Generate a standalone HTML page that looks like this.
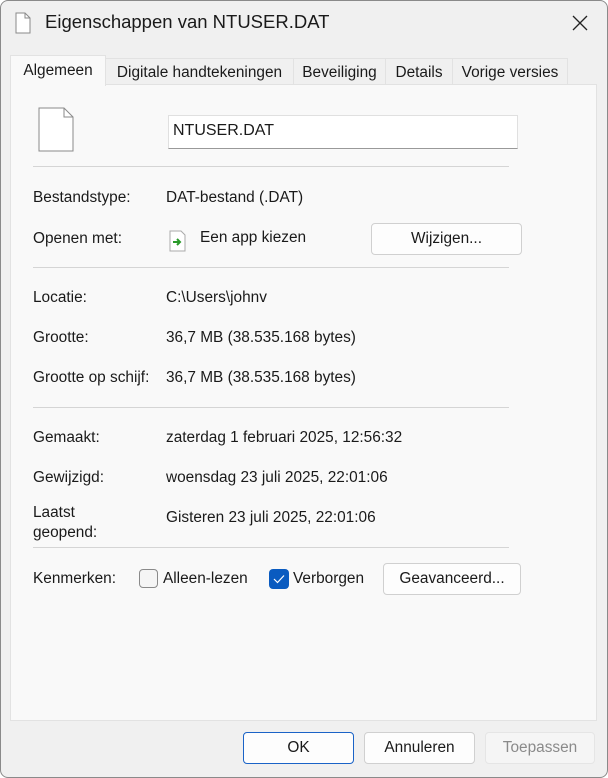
<!DOCTYPE html>
<html><head><style>
body{margin:0;width:608px;height:778px;background:#fff;font-family:"Liberation Sans",sans-serif;font-size:15.4px;color:#1a1a1a;overflow:hidden}
.win{position:absolute;left:0;top:0;width:606px;height:776px;border:1px solid #8a8a8a;border-radius:8px;background:#f0f0f0;overflow:hidden}
.in{position:absolute;left:-1px;top:-1px;width:608px;height:778px}
.abs{position:absolute;white-space:nowrap}
.panel{position:absolute;left:10px;top:84px;width:585px;height:635px;background:#f9f9f9;border:1px solid #e2e2e2}
.tab{position:absolute;top:58px;height:26px;border:1px solid #e2e2e2;border-bottom:none;background:#f0f0f0;box-sizing:border-box;text-align:center;line-height:28px}
.sep{position:absolute;left:33px;width:476px;height:1px;background:#d5d5d5}
.btn{position:absolute;height:32px;box-sizing:border-box;border:1px solid #d0d0d0;border-radius:4px;background:#fdfdfd;text-align:center;line-height:30px}
</style></head><body><div class="win"><div class="in">
<svg class="abs" style="left:15px;top:12px" width="16" height="22"><path d="M1 1H10L15 6V21H1Z" fill="#fff" stroke="#8a8a8a"/><path d="M10 1V6H15" fill="none" stroke="#8a8a8a"/></svg>
<div class="abs" style="left:45px;top:11px;font-size:18.5px">Eigenschappen van NTUSER.DAT</div>
<svg class="abs" style="left:572px;top:15px" width="16" height="16"><path d="M1 1L15 15M15 1L1 15" stroke="#222" stroke-width="1.3"/></svg>
<div class="panel"></div>
<div class="tab" style="left:105px;width:189px">Digitale handtekeningen</div>
<div class="tab" style="left:293px;width:93px">Beveiliging</div>
<div class="tab" style="left:385px;width:68px">Details</div>
<div class="tab" style="left:452px;width:116px">Vorige versies</div>
<div class="tab" style="left:10px;top:55px;width:96px;height:31px;background:#f9f9f9;line-height:30px">Algemeen</div>
<svg class="abs" style="left:38px;top:107px" width="36" height="45"><path d="M1 1H26L35 10V44H1Z" fill="#fff" stroke="#8a8a8a"/><path d="M26 1V10H35" fill="none" stroke="#8a8a8a"/></svg>
<div class="abs" style="left:168px;top:115px;width:350px;height:34px;background:#fff;border:1px solid #e0e0e0;border-bottom-color:#999;box-sizing:border-box;padding:6px 4px;font-size:16px">NTUSER.DAT</div>
<div class="sep" style="top:166px"></div>
<div class="abs" style="left:33px;top:189px">Bestandstype:</div><div class="abs" style="left:166px;top:189px">DAT-bestand (.DAT)</div>
<div class="abs" style="left:33px;top:230px">Openen met:</div>
<svg class="abs" style="left:169px;top:230px" width="17" height="22"><path d="M1 1H12L16 5V21H1Z" fill="#fff" stroke="#aaa"/><path d="M4 12H11M8 9L11 12L8 15" stroke="#2a9a2a" stroke-width="2" fill="none"/></svg>
<div class="abs" style="left:200px;top:229px">Een app kiezen</div>
<div class="btn" style="left:371px;top:223px;width:151px">Wijzigen...</div>
<div class="sep" style="top:267px"></div>
<div class="abs" style="left:33px;top:289px">Locatie:</div><div class="abs" style="left:166px;top:289px">C:\Users\johnv</div>
<div class="abs" style="left:33px;top:329px">Grootte:</div><div class="abs" style="left:166px;top:329px">36,7 MB (38.535.168 bytes)</div>
<div class="abs" style="left:33px;top:369px">Grootte op schijf:</div><div class="abs" style="left:166px;top:369px">36,7 MB (38.535.168 bytes)</div>
<div class="sep" style="top:407px"></div>
<div class="abs" style="left:33px;top:429px">Gemaakt:</div><div class="abs" style="left:166px;top:429px">zaterdag 1 februari 2025, 12:56:32</div>
<div class="abs" style="left:33px;top:469px">Gewijzigd:</div><div class="abs" style="left:166px;top:469px">woensdag 23 juli 2025, 22:01:06</div>
<div class="abs" style="left:33px;top:503px;line-height:20px">Laatst<br>geopend:</div><div class="abs" style="left:166px;top:509px">Gisteren 23 juli 2025, 22:01:06</div>
<div class="sep" style="top:547px"></div>
<div class="abs" style="left:33px;top:570px">Kenmerken:</div>
<div class="abs" style="left:139px;top:569px;width:19px;height:19px;box-sizing:border-box;border:1px solid #8a8a8a;border-radius:4px;background:#f5f5f5"></div>
<div class="abs" style="left:163px;top:570px">Alleen-lezen</div>
<div class="abs" style="left:269px;top:569px;width:20px;height:20px;border-radius:4px;background:#0a5bc0"><svg width="20" height="20"><path d="M5 10L8.5 13.5L15 6.5" stroke="#fff" stroke-width="1.2" fill="none"/></svg></div>
<div class="abs" style="left:293px;top:570px">Verborgen</div>
<div class="btn" style="left:383px;top:563px;width:138px">Geavanceerd...</div>
<div class="btn" style="left:243px;top:732px;width:111px;border-color:#1a63c7">OK</div>
<div class="btn" style="left:364px;top:732px;width:111px">Annuleren</div>
<div class="btn" style="left:485px;top:732px;width:110px;color:#8a8a8a;background:#f5f5f5;border-color:#e5e5e5">Toepassen</div>
</div></div></body></html>
